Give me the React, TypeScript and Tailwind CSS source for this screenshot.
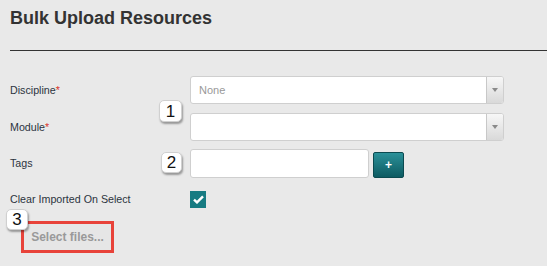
import React from "react";

function Badge({ n, className }: { n: string; className: string }) {
  return (
    <div
      className={
        "absolute z-10 flex items-center justify-center bg-white rounded-[5px] border border-[#d0d0d0] shadow-[1px_2px_2px_rgba(0,0,0,0.35)] text-[17px] leading-none text-[#111] " +
        className
      }
      style={{ fontFamily: '"Liberation Sans", Arial, sans-serif' }}
    >
      {n}
    </div>
  );
}

function SelectBox({ placeholder }: { placeholder?: string }) {
  return (
    <div className="flex w-[314px] h-[28px] bg-white border border-[#cfcfcf] rounded-[3px] overflow-hidden">
      <div className="flex-1 flex items-center pl-[8px] text-[11px] text-[#999]">
        {placeholder}
      </div>
      <div className="w-[17px] h-full border-l border-[#c8c8c8] bg-gradient-to-b from-[#f7f7f7] to-[#d9d9d9] flex items-center justify-center">
        <div className="w-0 h-0 border-l-[3.5px] border-r-[3.5px] border-t-[4px] border-l-transparent border-r-transparent border-t-[#8a8a8a]" />
      </div>
    </div>
  );
}

function Label({ text, req }: { text: string; req?: boolean }) {
  return (
    <div className="w-[180px] text-[10.7px] text-[#2c3440]">
      {text}
      {req && <span className="text-[#d9362b]">*</span>}
    </div>
  );
}

export default function App() {
  return (
    <div
      className="relative w-[547px] h-[266px] bg-[#e9e9e9] overflow-hidden"
      style={{ fontFamily: '"Liberation Sans", Arial, sans-serif' }}
    >
      <div className="ml-[10px] pt-[7px]">
        <h1 className="text-[18px] font-bold leading-[22px] text-[#333]">
          Bulk Upload Resources
        </h1>
        <div className="mt-[21px] h-px bg-[#333]" />
      </div>

      <div className="pl-[10px] pt-[25px] flex flex-col">
        <div className="flex items-center h-[28px]">
          <Label text="Discipline" req />
          <SelectBox placeholder="None" />
        </div>
        <div className="flex items-center h-[28px] mt-[9px]">
          <Label text="Module" req />
          <SelectBox />
        </div>
        <div className="flex items-center h-[29px] mt-[8px]">
          <Label text="Tags" />
          <div className="w-[179px] h-[29px] bg-white border border-[#cfcfcf] rounded-[3px]" />
          <div className="ml-[4px] mt-[3px] w-[31px] h-[26px] rounded-[2px] border border-[#0b4a50] bg-gradient-to-b from-[#2b9199] to-[#0d5b62] flex items-center justify-center text-white text-[12px] font-bold leading-none">
            +
          </div>
        </div>
        <div className="flex items-center h-[17px] mt-[13px]">
          <Label text="Clear Imported On Select" />
          <div className="w-[16px] h-[17px] bg-[#177b82] flex items-center justify-center">
            <svg width="11" height="9" viewBox="0 0 11 9">
              <path d="M1 4.6 L4 7.4 L10 1.4" stroke="white" strokeWidth="2.4" fill="none" />
            </svg>
          </div>
        </div>
        <div className="mt-[13px] ml-[11px] w-[93px] h-[32px] border-[3px] border-[#e8433a] flex items-center justify-center bg-[#e6e6e6]">
          <span className="text-[12px] font-bold text-[#999]">Select files...</span>
        </div>
      </div>

      <Badge n="1" className="left-[159px] top-[100px] w-[23px] h-[22px]" />
      <Badge n="2" className="left-[161px] top-[152px] w-[21px] h-[21px]" />
      <Badge n="3" className="left-[6px] top-[209px] w-[22px] h-[21px]" />
    </div>
  );
}
